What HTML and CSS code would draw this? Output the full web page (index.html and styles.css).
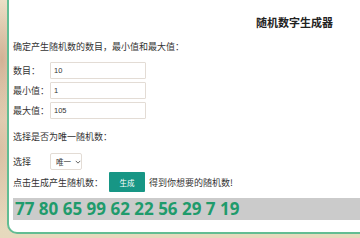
FILE: index.html
```html
<!DOCTYPE html>
<html lang="zh">
<head>
<meta charset="utf-8">
<link rel="stylesheet" href="styles.css">
</head>
<body>
<div class="card">
  <h1 class="title">随机数字生成器</h1>
  <p class="intro">确定产生随机数的数目，最小值和最大值：</p>
  <div class="fields">
    <div class="row"><span class="label">数目：</span><input class="field" type="text" value="10"></div>
    <div class="row"><span class="label">最小值：</span><input class="field" type="text" value="1"></div>
    <div class="row"><span class="label">最大值：</span><input class="field" type="text" value="105"></div>
  </div>
  <p class="intro unique">选择是否为唯一随机数：</p>
  <div class="row select-row"><span class="label">选择</span>
    <span class="select">唯一<svg class="chev" viewBox="0 0 8 5" width="6" height="4"><path d="M1 1 L4 4 L7 1" fill="none" stroke="#444" stroke-width="1.1"/></svg></span>
  </div>
  <div class="row gen-row"><span>点击生成产生随机数：</span><button class="btn">生成</button><span>得到你想要的随机数!</span></div>
  <div class="result">77 80 65 99 62 22 56 29 7 19</div>
</div>
</body>
</html>
```
FILE: styles.css
```css
html, body {
  margin: 0;
  padding: 0;
  width: 360px;
  height: 238px;
  overflow: hidden;
}
body {
  background:
    radial-gradient(ellipse 20px 60px at 2px 60px, rgba(190,140,110,0.55), rgba(190,140,110,0) 100%),
    radial-gradient(ellipse 30px 80px at 0px 150px, rgba(200,160,130,0.45), rgba(200,160,130,0) 100%),
    linear-gradient(180deg, #eadfc6 0%, #e6d9bd 100%);
  font-family: "Noto Sans CJK SC", "Noto Sans", sans-serif;
  color: #333;
}
.card {
  margin: -10px 0 0 7px;
  background: #fff;
  border: 2px solid #62bd93;
  border-right: none;
  border-radius: 10px 0 0 10px;
  padding: 0 0 12px 4px;
}
.title {
  margin: 20px 0 0;
  height: 20px;
  line-height: 20px;
  font-size: 11px;
  font-weight: bold;
  color: #222;
  text-align: right;
  padding-right: 27px;
}
.intro {
  margin: 7px 0 0;
  height: 16px;
  line-height: 16px;
  font-size: 9px;
}
.fields {
  margin-top: 7px;
  display: flex;
  flex-direction: column;
  gap: 3px;
}
.row {
  display: flex;
  align-items: center;
  height: 17px;
  font-size: 9px;
}
.label {
  width: 37px;
  flex: none;
}
.field {
  width: 96px;
  height: 17px;
  box-sizing: border-box;
  border: 1px solid #e3dcd5;
  border-radius: 1px;
  padding: 0 0 0 3px;
  margin: 0;
  font-family: "Liberation Sans", sans-serif;
  font-size: 7.5px;
  color: #333;
  outline: none;
}
.unique {
  margin-top: 10px;
}
.select-row {
  margin-top: 8px;
}
.select {
  width: 32px;
  height: 17px;
  box-sizing: border-box;
  border: 1px solid #e3dcd5;
  border-radius: 2px;
  display: flex;
  align-items: center;
  gap: 4px;
  padding-left: 5px;
  font-size: 7.5px;
}
.chev {
  display: block;
}
.gen-row {
  margin-top: 2px;
  height: 20px;
}
.btn {
  width: 36px;
  height: 20px;
  margin: 0 4px 0 6px;
  border: none;
  border-radius: 1px;
  background: #179685;
  color: #fff;
  font-family: "Noto Sans CJK SC", sans-serif;
  font-size: 7.5px;
  padding: 0;
}
.result {
  margin-top: 6px;
  height: 22px;
  line-height: 22px;
  background: #cbcbcb;
  color: #1f9b6c;
  font-family: "Open Sans", "Noto Sans", sans-serif;
  font-weight: bold;
  font-size: 17px;
  padding-left: 2px;
  white-space: nowrap;
}
```
